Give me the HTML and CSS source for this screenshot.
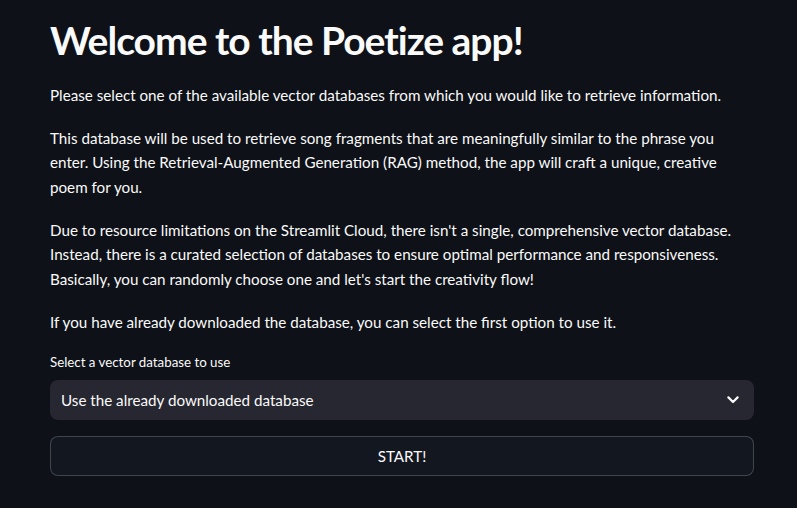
FILE: index.html
```html
<!DOCTYPE html>
<html>
<head>
<meta charset="utf-8">
<link rel="stylesheet" href="styles.css">
</head>
<body>
<main class="main">
  <h1 class="title">Welcome to the Poetize app!</h1>
  <p class="para">Please select one of the available vector databases from which you would like to retrieve information.</p>
  <p class="para">This database will be used to retrieve song fragments that are meaningfully similar to the phrase you enter. Using the Retrieval-Augmented Generation (RAG) method, the app will craft a unique, creative poem for you.</p>
  <p class="para">Due to resource limitations on the Streamlit Cloud, there isn't a single, comprehensive vector database. Instead, there is a curated selection of databases to ensure optimal performance and responsiveness. Basically, you can randomly choose one and let's start the creativity flow!</p>
  <p class="para">If you have already downloaded the database, you can select the first option to use it.</p>
  <div class="field">
    <label class="label">Select a vector database to use</label>
    <div class="select">
      <span class="select-value">Use the already downloaded database</span>
      <svg class="chevron" width="12" height="8" viewBox="0 0 12 8"><path d="M1.4 1.4L6 6L10.6 1.4" fill="none" stroke="#fafafa" stroke-width="2.2" stroke-linecap="round" stroke-linejoin="round"/></svg>
    </div>
  </div>
  <button class="btn">START!</button>
</main>
</body>
</html>
```
FILE: styles.css
```css
html, body {
  margin: 0;
  padding: 0;
  background: #0e1117;
}
body {
  font-family: Lato, "Liberation Sans", sans-serif;
  color: #fafafa;
  width: 797px;
  height: 508px;
  overflow: hidden;
}
.main {
  width: 704px;
  margin-left: 50px;
  padding-top: 15px;
  display: flex;
  flex-direction: column;
}
.title {
  font-size: 39px;
  font-weight: 700;
  line-height: 50px;
  margin: 0 0 17.6px 0;
  letter-spacing: -1px;
}
.para {
  font-size: 15.2px;
  line-height: 24.5px;
  margin: 0 0 18.6px 0;
}
.field {
  display: flex;
  flex-direction: column;
}
.label {
  font-size: 13.3px;
  line-height: 18px;
  margin-bottom: 9px;
}
.select {
  height: 40px;
  background: #262730;
  border-radius: 8px;
  display: flex;
  align-items: center;
  justify-content: space-between;
  padding: 0 15px 0 11px;
  box-sizing: border-box;
}
.select-value {
  font-size: 15.2px;
}
.chevron {
  display: block;
}
.btn {
  margin-top: 16px;
  height: 40px;
  background: #131720;
  border: 1px solid rgba(250, 250, 250, 0.2);
  border-radius: 8px;
  color: #fafafa;
  font-family: inherit;
  font-size: 15.2px;
  padding: 0;
}
```
